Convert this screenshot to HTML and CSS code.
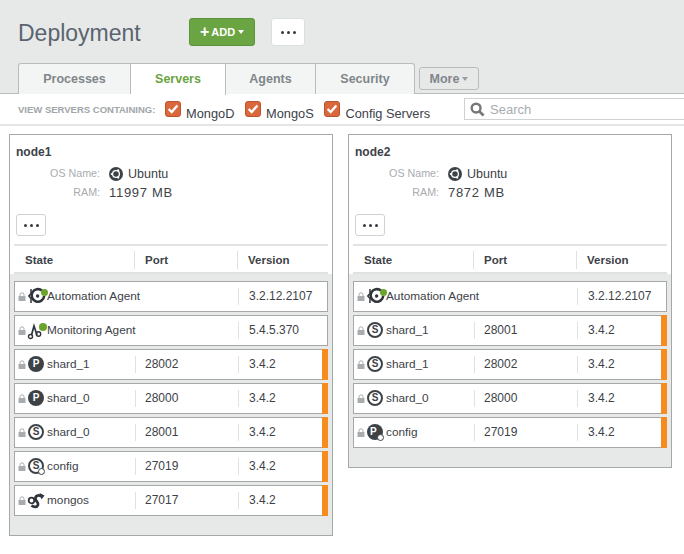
FILE: index.html
```html
<!DOCTYPE html>
<html lang="en">
<head>
<meta charset="utf-8">
<title>Deployment</title>
<link rel="stylesheet" href="styles.css">
</head>
<body>
<svg class="defs" width="0" height="0" aria-hidden="true">
  <defs>
    <symbol id="lock" viewBox="0 0 8 9"><path d="M0.5 4h7v5h-7z" fill="#a9acae"/><path d="M2 4V2.8a2 2 0 0 1 4 0V4" fill="none" stroke="#a9acae" stroke-width="1"/></symbol>
    <symbol id="auto" viewBox="0 0 20 20"><path d="M15 4.6A6.3 6.3 0 1 0 17.2 10" fill="none" stroke="#2f353b" stroke-width="2.6"/><circle cx="10.6" cy="10" r="1.7" fill="#2f353b"/><path d="M4 3v4.5L1.8 10 4 12.500V17" fill="none" stroke="#2f353b" stroke-width="1.5"/></symbol>
    <symbol id="mon" viewBox="0 0 20 20"><circle cx="3.500" cy="16.500" r="2" fill="none" stroke="#2f353b" stroke-width="1.400"/><path d="M4.500 15L7 6l3 9" fill="none" stroke="#2f353b" stroke-width="1.700"/><circle cx="11.500" cy="14" r="2.200" fill="none" stroke="#2f353b" stroke-width="1.400"/></symbol>
    <symbol id="mongos" viewBox="0 0 20 20"><path d="M14.500 6.500c-3-2.500-6.500-.5-6 2.500s3.500 3.500 2.500 6-4 2.500-6.500.5" fill="none" stroke="#2f353b" stroke-width="2.800"/><circle cx="4.500" cy="10.500" r="2.800" fill="none" stroke="#2f353b" stroke-width="1.800"/><path d="M12.500 3l5 2.500-3 4z" fill="#2f353b"/></symbol>
  </defs>
</svg>
<header class="top">
  <div class="title-row">
    <h1 class="title">Deployment</h1>
    <button class="btn-add"><span class="plus">+</span>ADD<span class="caret caret-white"></span></button>
    <button class="btn-dots"><span class="dots"><i></i><i></i><i></i></span></button>
  </div>
  <nav class="tabs">
    <a class="tab t1">Processes</a>
    <a class="tab t2 active">Servers</a>
    <a class="tab t3">Agents</a>
    <a class="tab t4">Security</a>
    <a class="more">More<span class="caret caret-gray"></span></a>
  </nav>
</header>
<section class="filters">
  <span class="filter-label">VIEW SERVERS CONTAINING:</span>
  <label class="check"><span class="box"><svg viewBox="0 0 16 16" width="14" height="14"><path d="M3 8l3.500 3.500L13 4" fill="none" stroke="#fff" stroke-width="2.600"/></svg></span><span class="check-text">MongoD</span></label>
  <label class="check"><span class="box"><svg viewBox="0 0 16 16" width="14" height="14"><path d="M3 8l3.500 3.500L13 4" fill="none" stroke="#fff" stroke-width="2.600"/></svg></span><span class="check-text">MongoS</span></label>
  <label class="check"><span class="box"><svg viewBox="0 0 16 16" width="14" height="14"><path d="M3 8l3.500 3.500L13 4" fill="none" stroke="#fff" stroke-width="2.600"/></svg></span><span class="check-text">Config Servers</span></label>
  <div class="search">
    <svg viewBox="0 0 16 16" width="15" height="15"><circle cx="6.500" cy="6.500" r="4.700" fill="none" stroke="#777" stroke-width="2.600"/><path d="M10 10l4.500 4.500" stroke="#777" stroke-width="3"/></svg>
    <span class="search-text">Search</span>
  </div>
</section>
<main class="nodes">
  <article class="node">
    <div class="node-head">
      <h2 class="node-name">node1</h2>
      <dl class="info">
        <dt>OS Name:</dt><dd><svg class="ubuntu" viewBox="0 0 14 14" width="14" height="14"><circle cx="7" cy="7" r="7" fill="#3d4247"/><circle cx="7" cy="7" r="3.400" fill="none" stroke="#fff" stroke-width="1.300"/><circle cx="2.800" cy="7" r="1.100" fill="#fff"/><circle cx="9.200" cy="3.400" r="1.100" fill="#fff"/><circle cx="9.200" cy="10.600" r="1.100" fill="#fff"/></svg><span class="os-text">Ubuntu</span></dd>
        <dt>RAM:</dt><dd class="ram">11997 MB</dd>
      </dl>
      <button class="btn-small"><span class="dots"><i></i><i></i><i></i></span></button>
      <div class="thead"><span class="c1">State</span><span class="c2">Port</span><span class="c3">Version</span></div>
    </div>
    <div class="rows">
      <div class="row agent"><span class="c1"><svg class="lock"><use href="#lock"/></svg><span class="ic"><svg width="20" height="20"><use href="#auto"/></svg><b class="dot"></b></span>Automation Agent</span><span class="c3">3.2.12.2107</span></div>
      <div class="row agent"><span class="c1"><svg class="lock"><use href="#lock"/></svg><span class="ic"><svg width="20" height="20"><use href="#mon"/></svg><b class="dot dot-m"></b></span>Monitoring Agent</span><span class="c3">5.4.5.370</span></div>
      <div class="row flag"><span class="c1"><svg class="lock"><use href="#lock"/></svg><span class="ic"><span class="role p">P</span></span>shard_1</span><span class="c2">28002</span><span class="c3">3.4.2</span></div>
      <div class="row flag"><span class="c1"><svg class="lock"><use href="#lock"/></svg><span class="ic"><span class="role p">P</span></span>shard_0</span><span class="c2">28000</span><span class="c3">3.4.2</span></div>
      <div class="row flag"><span class="c1"><svg class="lock"><use href="#lock"/></svg><span class="ic"><span class="role s">S</span></span>shard_0</span><span class="c2">28001</span><span class="c3">3.4.2</span></div>
      <div class="row flag"><span class="c1"><svg class="lock"><use href="#lock"/></svg><span class="ic"><span class="role s">S</span><span class="sub"></span></span>config</span><span class="c2">27019</span><span class="c3">3.4.2</span></div>
      <div class="row flag"><span class="c1"><svg class="lock"><use href="#lock"/></svg><span class="ic"><svg width="20" height="20"><use href="#mongos"/></svg></span>mongos</span><span class="c2">27017</span><span class="c3">3.4.2</span></div>
    </div>
  </article>
  <article class="node">
    <div class="node-head">
      <h2 class="node-name">node2</h2>
      <dl class="info">
        <dt>OS Name:</dt><dd><svg class="ubuntu" viewBox="0 0 14 14" width="14" height="14"><circle cx="7" cy="7" r="7" fill="#3d4247"/><circle cx="7" cy="7" r="3.400" fill="none" stroke="#fff" stroke-width="1.300"/><circle cx="2.800" cy="7" r="1.100" fill="#fff"/><circle cx="9.200" cy="3.400" r="1.100" fill="#fff"/><circle cx="9.200" cy="10.600" r="1.100" fill="#fff"/></svg><span class="os-text">Ubuntu</span></dd>
        <dt>RAM:</dt><dd class="ram">7872 MB</dd>
      </dl>
      <button class="btn-small"><span class="dots"><i></i><i></i><i></i></span></button>
      <div class="thead"><span class="c1">State</span><span class="c2">Port</span><span class="c3">Version</span></div>
    </div>
    <div class="rows">
      <div class="row agent"><span class="c1"><svg class="lock"><use href="#lock"/></svg><span class="ic"><svg width="20" height="20"><use href="#auto"/></svg><b class="dot"></b></span>Automation Agent</span><span class="c3">3.2.12.2107</span></div>
      <div class="row flag"><span class="c1"><svg class="lock"><use href="#lock"/></svg><span class="ic"><span class="role s">S</span></span>shard_1</span><span class="c2">28001</span><span class="c3">3.4.2</span></div>
      <div class="row flag"><span class="c1"><svg class="lock"><use href="#lock"/></svg><span class="ic"><span class="role s">S</span></span>shard_1</span><span class="c2">28002</span><span class="c3">3.4.2</span></div>
      <div class="row flag"><span class="c1"><svg class="lock"><use href="#lock"/></svg><span class="ic"><span class="role s">S</span></span>shard_0</span><span class="c2">28000</span><span class="c3">3.4.2</span></div>
      <div class="row flag"><span class="c1"><svg class="lock"><use href="#lock"/></svg><span class="ic"><span class="role p shifted">P</span><span class="sub"></span></span>config</span><span class="c2">27019</span><span class="c3">3.4.2</span></div>
    </div>
  </article>
</main>
</body>
</html>
```
FILE: styles.css
```css
* { box-sizing: border-box; }
html, body { margin: 0; padding: 0; }
body { width: 684px; height: 554px; overflow: hidden; background: #fff; font-family: "Liberation Sans", Arial, sans-serif; color: #3d4247; font-size: 12px; }
.defs { position: absolute; }
button { font-family: inherit; padding: 0; cursor: pointer; }

.top { height: 94px; background: #e7e9e9; border-bottom: 1px solid #b9bcbc; padding-left: 18px; }
.title-row { display: flex; align-items: flex-start; height: 63px; padding-top: 18px; }
.title { margin: 0; width: 171px; font-size: 23px; font-weight: 400; line-height: 30px; color: #5a6470; white-space: nowrap; }
.btn-add { width: 66px; height: 28px; background: #6ba442; border: 1px solid #5d9339; border-radius: 3px; color: #fff; font-size: 11px; font-weight: 700; display: flex; align-items: center; justify-content: center; }
.plus { font-size: 16px; margin-right: 2px; line-height: 14px; }
.caret { display: inline-block; width: 0; height: 0; border-left: 3.5px solid transparent; border-right: 3.5px solid transparent; margin-left: 3px; }
.caret-white { border-top: 4px solid #fff; }
.caret-gray { border-top: 4px solid #9a9d9f; }
.btn-dots { width: 34px; height: 28px; margin-left: 16px; background: #fff; border: 1px solid #dcdfdf; border-radius: 3px; display: flex; align-items: center; justify-content: center; }
.dots { display: flex; gap: 3px; }
.dots i { width: 3px; height: 3px; border-radius: 50%; background: #333a40; }

.tabs { display: flex; align-items: flex-start; }
.tab { height: 31px; background: #f3f5f4; border: 1px solid #b9bcbc; border-bottom: 0; border-left-width: 0; font-size: 12.5px; font-weight: 700; color: #80868a; display: flex; align-items: center; justify-content: center; padding-bottom: 1px; }
.t1 { width: 113px; border-left-width: 1px; border-top-left-radius: 3px; }
.t2 { width: 95px; }
.t3 { width: 90px; }
.t4 { width: 99px; border-top-right-radius: 3px; }
.tab.active { background: #fff; color: #6ba442; height: 32px; position: relative; }
.more { width: 60px; height: 23px; margin: 4px 0 0 4px; background: #e7e9e9; border: 1px solid #b9bcbc; border-radius: 3px; font-size: 12.5px; font-weight: 700; color: #80868a; display: flex; align-items: center; justify-content: center; }

.filters { height: 32px; border-bottom: 2px solid #e4e6e6; display: flex; align-items: flex-start; padding-left: 18px; position: relative; }
.filter-label { font-size: 9.5px; font-weight: 700; color: #a0a5a9; margin-top: 10px; width: 147px; white-space: nowrap; }
.check { display: flex; align-items: flex-start; margin-right: 10.7px; }
.box { width: 16px; height: 16px; margin-top: 7px; border-radius: 3px; background: #d9683d; border: 1px solid #b8532c; display: flex; align-items: center; justify-content: center; }
.box svg { display: block; }
.check-text { font-size: 12.8px; color: #3d4247; margin: 12px 0 0 5px; line-height: 15px; white-space: nowrap; }
.search { position: absolute; left: 464px; top: 4px; width: 220px; height: 22px; border: 1px solid #cfd2d2; border-right: 0; display: flex; align-items: center; padding-left: 5px; gap: 5px; }
.search-text { font-size: 13px; color: #a8acaf; }

.nodes { display: flex; align-items: flex-start; gap: 15px; padding: 8px 0 0 9px; }
.node { width: 324px; background: #e7e9e9; border: 1px solid #a6a8a8; padding-bottom: 19px; }
.node-head { background: #fff; height: 139px; padding: 10px 4px 0 4px; }
.node-name { margin: 0 2px; font-size: 12px; font-weight: 700; color: #3d4247; line-height: 14px; }
.info { margin: 5px 0 0 2px; display: grid; grid-template-columns: 84px 1fr; column-gap: 9px; row-gap: 0; align-items: center; }
.info dt { text-align: right; font-size: 10.7px; color: #a8acaf; height: 19px; line-height: 19px; }
.info dd { margin: 0; font-size: 12.5px; height: 19px; line-height: 19px; display: flex; align-items: center; gap: 5px; }
.os-text { margin-top: 2px; }
.info .ram { font-size: 13px; letter-spacing: 0.7px; }
.btn-small { display: flex; align-items: center; justify-content: center; width: 30px; height: 22px; margin: 12px 0 0 2px; background: #fff; border: 1px solid #cfd2d2; border-radius: 3px; }
.thead { height: 30px; margin-top: 8px; padding-top: 2px; border-top: 2px solid #e2e4e4; border-bottom: 2px solid #dfe1e1; display: flex; align-items: center; font-weight: 700; font-size: 11.5px; color: #3d4247; }
.c1 { width: 120px; padding-left: 11px; display: flex; align-items: center; height: 100%; white-space: nowrap; }
.c2 { width: 103px; padding-left: 10px; border-left: 1px solid #e0e2e2; }
.c3 { padding-left: 10px; border-left: 1px solid #e0e2e2; flex: 1; }
.thead .c2, .thead .c3 { height: 18px; line-height: 18px; }
.rows { padding: 7px 4px 0 4px; display: flex; flex-direction: column; gap: 3px; }
.row { height: 31px; background: #fff; border: 1px solid #a6a8a8; display: flex; align-items: center; font-size: 12px; color: #3d4247; position: relative; }
.row .c1 { padding: 0 0 2px 3px; height: auto; font-size: 11.8px; }
.row .c2 { height: 17px; line-height: 17px; padding-left: 9px; }
.row .c3 { height: 17px; line-height: 17px; }
.row.agent .c3 { margin-left: 103px; }
.row.flag::after { content: ""; position: absolute; right: -1px; top: -1px; bottom: -1px; width: 6px; background: #f68b1f; }
.lock { width: 8px; height: 9px; margin: 2px 2px 0 0; flex: none; }
.ic { position: relative; width: 18px; height: 18px; margin: 2px 1px 0 0; flex: none; display: block; }
.ic > svg { position: absolute; left: -1px; top: -2px; }
.dot { position: absolute; left: 13px; top: 1px; width: 7px; height: 7px; border-radius: 50%; background: #6ba42d; }
.dot-m { left: 11px; width: 8px; height: 8px; }
.role { width: 16px; height: 16px; border-radius: 50%; display: flex; align-items: center; justify-content: center; font-size: 10px; font-weight: 700; position: absolute; left: 0; top: 0; }
.role.p { background: #3d4247; color: #fff; }
.role.s { background: #fff; color: #3d4247; border: 2px solid #3d4247; }
.role.shifted { justify-content: flex-start; padding-left: 3px; }
.sub { position: absolute; left: 10px; top: 10px; width: 7px; height: 7px; border-radius: 50%; border: 1.5px solid #3d4247; background: #fff; }
```
